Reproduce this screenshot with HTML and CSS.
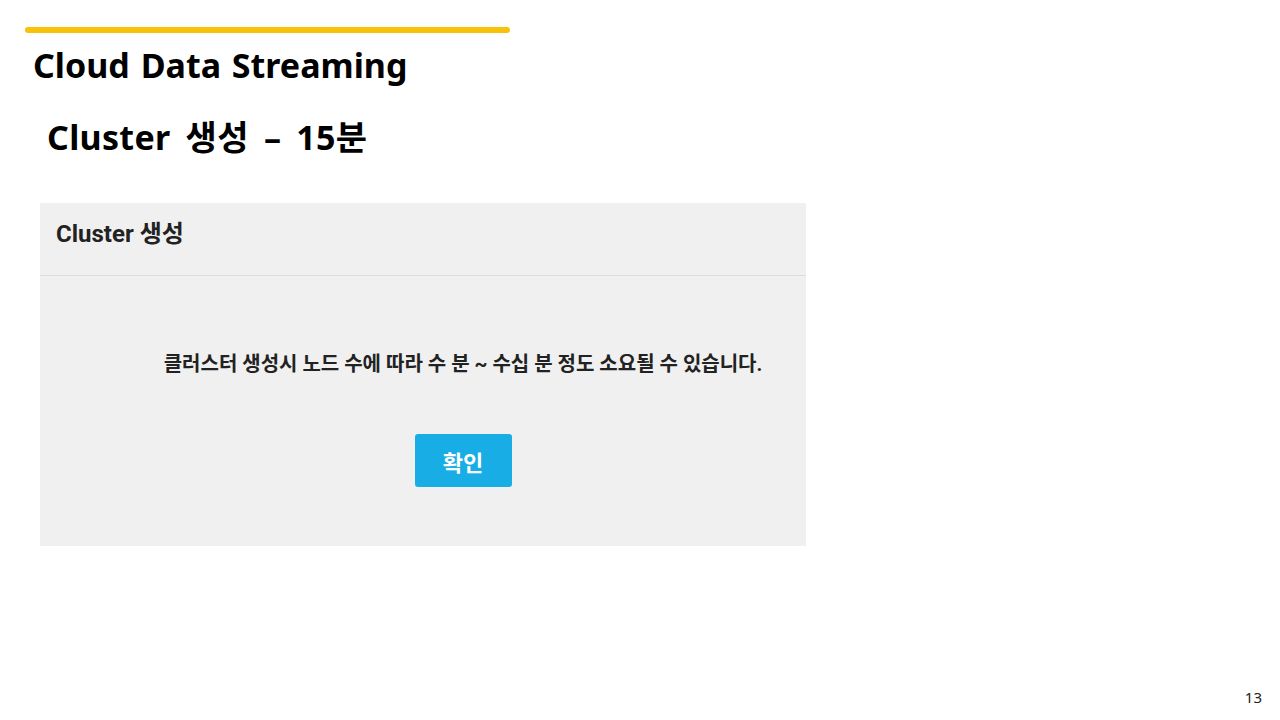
FILE: index.html
```html
<!DOCTYPE html>
<html lang="ko">
<head>
  <meta charset="UTF-8" />
  <title>Cloud Data Streaming</title>
  <link rel="stylesheet" href="styles.css">
</head>
<body>
  <div class="slide">
    <div class="accent-bar"></div>
    <h1 class="title">Cloud Data Streaming</h1>
    <h2 class="subtitle">Cluster 생성 – 15분</h2>

    <div class="dialog">
      <div class="dialog-head">Cluster 생성</div>
      <div class="dialog-body">
        <p class="message">클러스터 생성시 노드 수에 따라 수 분 ~ 수십 분 정도 소요될 수 있습니다.</p>
        <button class="confirm">확인</button>
      </div>
    </div>

    <div class="page-num">13</div>
  </div>
</body>
</html>
```

FILE: styles.css
```css
:root {
  --accent: #f9c10a;
  --panel: #f0f0f0;
  --line: #dcdcdc;
  --blue: #19ade6;
  --text: #000;
  --font: "Noto Sans", "Noto Sans CJK KR", sans-serif;
  --font-ui: Roboto, "Noto Sans CJK KR", sans-serif;
}
* { box-sizing: border-box; margin: 0; padding: 0; }
body { background: #fff; font-family: var(--font); color: var(--text); }
.slide {
  position: relative;
  width: 1280px;
  height: 720px;
  padding: 27px 0 0 25px;
  overflow: hidden;
}
.accent-bar {
  width: 485px;
  height: 6px;
  border-radius: 3px;
  background: var(--accent);
}
.title {
  margin: 10px 0 0 8px;
  font-size: 34px;
  font-weight: 700;
  line-height: 44px;
  word-spacing: 2px;
}
.subtitle {
  margin: 28px 0 0 22px;
  font-size: 34px;
  font-weight: 700;
  line-height: 44px;
  word-spacing: 6px;
  letter-spacing: 0.3px;
}
.dialog {
  margin: 44px 0 0 15px;
  width: 766px;
  height: 343px;
  background: var(--panel);
  font-family: var(--font-ui);
}
.dialog-head {
  height: 73px;
  padding: 11px 0 0 16px;
  border-bottom: 1px solid var(--line);
  font-size: 24px;
  font-weight: 700;
  color: #222;
}
.dialog-body {
  padding: 74px 0 0 80px;
  display: flex;
  flex-direction: column;
  align-items: center;
}
.message {
  font-size: 20px;
  font-weight: 700;
  color: #222;
  line-height: 28px;
}
.confirm {
  margin-top: 56px;
  width: 97px;
  height: 53px;
  border: none;
  border-radius: 3px;
  background: var(--blue);
  color: #fff;
  font-family: var(--font-ui);
  font-size: 22px;
  font-weight: 700;
}
.page-num {
  position: absolute;
  right: 18px;
  bottom: 13px;
  font-size: 15px;
  color: #222;
}
```
